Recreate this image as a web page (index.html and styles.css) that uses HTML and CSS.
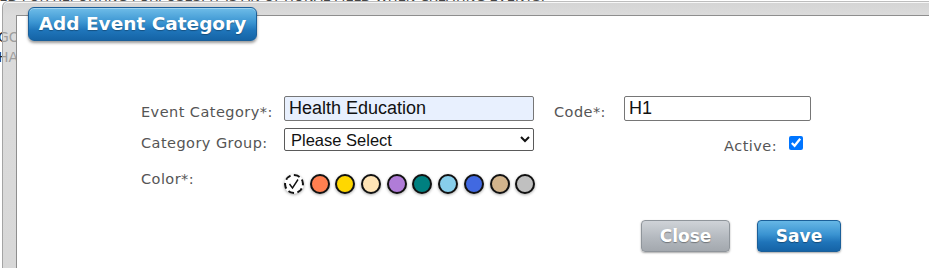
FILE: index.html
```html
<!DOCTYPE html>
<html>
<head>
<meta charset="utf-8">
<link rel="stylesheet" href="styles.css">
</head>
<body>
<div class="page">
  <div class="page-note">This field is used for reporting purposes. It is an optional field when creating events.</div>
  <div class="page-line first">Goals</div>
  <div class="page-line">Handouts</div>
</div>
<div class="dialog">
  <div class="dialog-title">Add Event Category</div>
  <div class="dialog-body">
    <div class="form">
      <label class="lbl r1">Event Category*:</label>
      <input class="txt autofill" type="text" value="Health Education">
      <span class="spacer"></span>
      <label class="lbl r1">Code*:</label>
      <input class="txt" type="text" value="H1">

      <label class="lbl r2">Category Group:</label>
      <select class="sel"><option>Please Select</option></select>
      <span class="spacer"></span>
      <div class="active-cell">
        <label class="lbl r2b">Active:</label>
        <input class="chk" type="checkbox" checked>
      </div>

      <label class="lbl r3">Color*:</label>
      <div class="swatches">
        <span class="swatch none"><svg width="16" height="16" viewBox="0 0 16 16"><polyline points="3.5,8 6.5,12 12,3.5" fill="none" stroke="#111" stroke-width="1.4"/></svg></span>
        <span class="swatch" style="background:#ff7f50"></span>
        <span class="swatch" style="background:#ffd700"></span>
        <span class="swatch" style="background:#ffe4b5"></span>
        <span class="swatch" style="background:#b07cd8"></span>
        <span class="swatch" style="background:#008080"></span>
        <span class="swatch" style="background:#87ceeb"></span>
        <span class="swatch" style="background:#4169e1"></span>
        <span class="swatch" style="background:#d2b48c"></span>
        <span class="swatch" style="background:#c0c0c0"></span>
      </div>
    </div>
    <div class="actions">
      <button class="btn btn-gray" type="button">Close</button>
      <button class="btn btn-blue" type="button">Save</button>
    </div>
  </div>
</div>
</body>
</html>
```

FILE: styles.css
```css
html, body {
  margin: 0;
  padding: 0;
  background: #fff;
  width: 929px;
  height: 268px;
  overflow: hidden;
}
body {
  position: relative;
  font-family: "DejaVu Sans", Verdana, sans-serif;
}
.page {
  color: #444;
  font-size: 13px;
  text-transform: uppercase;
}
.page-note {
  width: 545px;
  display: flex;
  justify-content: flex-end;
  white-space: nowrap;
  overflow: hidden;
  line-height: 16px;
  margin-top: -11px;
}
.page-line {
  margin-left: -2px;
  font-size: 14px;
  line-height: 20px;
  color: #222;
}
.page-line.first {
  margin-top: 22px;
}
.dialog {
  position: absolute;
  left: 2px;
  top: 1px;
  width: 960px;
  height: 300px;
  border: 1px solid #a4a4a4;
  border-top-color: #bdbdbd;
  border-radius: 6px 0 0 0;
  background: linear-gradient(rgba(196,196,196,0.72), rgba(206,206,206,0.72) 14px, rgba(200,200,200,0.72));
  box-shadow: inset 0 1px 0 rgba(255,255,255,0.8);
  padding: 13px 0 0 13px;
  box-sizing: border-box;
}
.dialog-title {
  position: absolute;
  left: 25px;
  top: 5px;
  width: 229px;
  height: 34px;
  box-sizing: border-box;
  border: 1px solid #1b5f99;
  border-radius: 6px;
  background: linear-gradient(#6fbde8, #3b95d2 45%, #1f75ba 70%, #1564a6);
  box-shadow: 0 2px 3px rgba(0,0,0,0.4), inset 0 1px 0 rgba(255,255,255,0.35);
  color: #fff;
  font-weight: bold;
  font-size: 18.5px;
  line-height: 31px;
  text-align: center;
  text-shadow: 0 1px 1px rgba(0,0,0,0.3);
  white-space: nowrap;
  z-index: 2;
}
.dialog-body {
  background: #fff;
  border-left: 1px solid #8e8e8e;
  border-top: 1px solid #8e8e8e;
  height: 100%;
  box-sizing: border-box;
  padding: 80px 0 0 124px;
}
.form {
  display: grid;
  grid-template-columns: 143px 250px 20px 70px 187px;
  grid-template-rows: 25px 23px auto;
  row-gap: 7px;
  align-items: start;
}
.lbl {
  font-size: 14.5px;
  letter-spacing: 0.45px;
  line-height: 17px;
  color: #555;
  white-space: nowrap;
}
.lbl.r1 { padding-top: 8px; }
.lbl.r2 { padding-top: 7px; }
.lbl.r2b { padding-top: 10px; }
.lbl.r3 { padding-top: 13px; }
.txt {
  box-sizing: border-box;
  height: 25px;
  margin: 0;
  border: 1px solid #767676;
  border-radius: 2px;
  padding: 0 4px;
  font-family: "Liberation Sans", Arial, sans-serif;
  font-size: 18px;
  color: #111;
  background: #fff;
  width: 100%;
}
.txt.autofill {
  background: #e8f0fe;
}
.sel {
  box-sizing: border-box;
  height: 23px;
  width: 100%;
  margin: 0;
  border: 1px solid #5a5a5a;
  border-radius: 2px;
  font-family: "Liberation Sans", Arial, sans-serif;
  font-size: 16.5px;
  color: #111;
  background: #fff;
  padding: 0 2px;
}
.active-cell {
  grid-column: 4 / 6;
  display: flex;
  justify-content: flex-end;
  align-items: flex-start;
  padding-right: 8px;
}
.chk {
  width: 14px;
  height: 14px;
  margin: 8px 0 0 12px;
}
.swatches {
  grid-column: 2 / 4;
  display: flex;
  gap: 5.7px;
  padding-top: 16px;
}
.swatch {
  width: 20px;
  height: 20px;
  box-sizing: border-box;
  border: 2px solid #111;
  border-radius: 50%;
  box-shadow: 0 1px 3px rgba(0,0,0,0.35);
  display: flex;
  align-items: center;
  justify-content: center;
}
.swatch.none {
  background: #fff;
  border-style: dashed;
}
.actions {
  width: 700px;
  display: flex;
  justify-content: flex-end;
  gap: 27px;
  margin-top: 26px;
}
.btn {
  height: 32px;
  box-sizing: border-box;
  border-radius: 4px;
  font-family: "DejaVu Sans", Verdana, sans-serif;
  font-weight: bold;
  font-size: 17px;
  color: #fff;
  text-shadow: 0 1px 1px rgba(0,0,0,0.35);
  padding: 0;
  box-shadow: 0 1px 2px rgba(0,0,0,0.35);
}
.btn-gray {
  width: 89px;
  border: 1px solid #8f959b;
  background: linear-gradient(#cfd3d8, #b4b9bf 55%, #a3a8ae);
}
.btn-blue {
  width: 84px;
  border: 1px solid #1b5f99;
  background: linear-gradient(#66b7e6, #3a93d1 45%, #1f74b9 70%, #1563a6);
}
```
